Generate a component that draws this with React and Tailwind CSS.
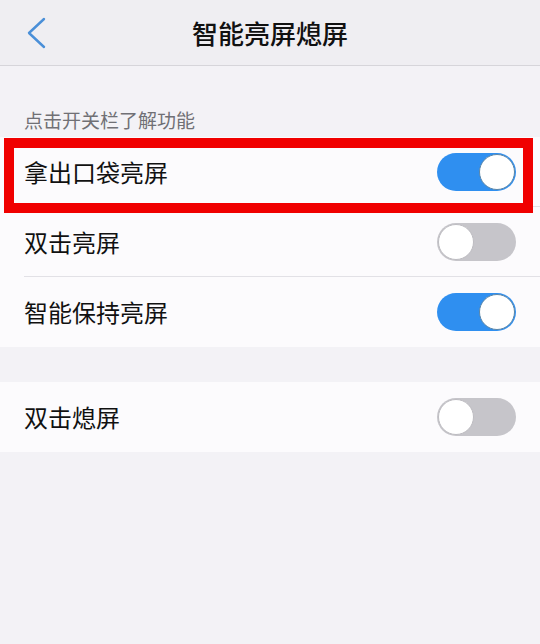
import React from 'react'

const font = { fontFamily: '"Noto Sans CJK SC", "Noto Sans", sans-serif' }

function Toggle({ on }) {
  return (
    <div
      className={`flex h-[38px] w-[79px] items-center rounded-full p-[1px] ${
        on ? 'justify-end bg-[#2f8ff0]' : 'justify-start bg-[#c6c5ca]'
      }`}
    >
      <div
        className={`h-[36px] w-[36px] rounded-full bg-white ${
          on ? 'border border-[#5b86a8]' : 'border border-[#bdbcc1]'
        }`}
      />
    </div>
  )
}

function Row({ label, on, divider }) {
  return (
    <div className="flex h-[70px] items-center pl-[24px]">
      <div
        className={`flex h-full flex-1 items-center justify-between pr-[24px] ${
          divider ? 'border-b border-[#e2e1e6]' : ''
        }`}
      >
        <span className="text-[24px] leading-none text-[#111111]">{label}</span>
        <Toggle on={on} />
      </div>
    </div>
  )
}

export default function App() {
  return (
    <div className="relative h-[644px] w-[540px] overflow-hidden bg-[#f3f2f6]" style={font}>
      <header className="relative flex h-[66px] items-center justify-center border-b border-[#d6d5da] bg-[#efeef2]">
        <button className="absolute left-[24px] top-[16px] text-[#4a8fd8]" aria-label="back">
          <svg width="26" height="34" viewBox="0 0 26 34" fill="none">
            <path d="M20 3 L5 17 L20 31" stroke="currentColor" strokeWidth="2.4" strokeLinecap="round" strokeLinejoin="round" />
          </svg>
        </button>
        <h1 className="text-[26px] font-medium text-[#111111]">智能亮屏熄屏</h1>
      </header>

      <div className="px-[24px] pb-[6px] pt-[44px] text-[19px] leading-none text-[#707075]">
        点击开关栏了解功能
      </div>

      <div className="mt-[2px] bg-[#fcfbfd]">
        <Row label="拿出口袋亮屏" on divider />
        <Row label="双击亮屏" divider />
        <Row label="智能保持亮屏" on />
      </div>

      <div className="mt-[35px] bg-[#fcfbfd]">
        <Row label="双击熄屏" />
      </div>

      <div className="pointer-events-none absolute left-[4px] top-[138px] h-[75px] w-[529px] border-[10px] border-[#f00000]" />
    </div>
  )
}
